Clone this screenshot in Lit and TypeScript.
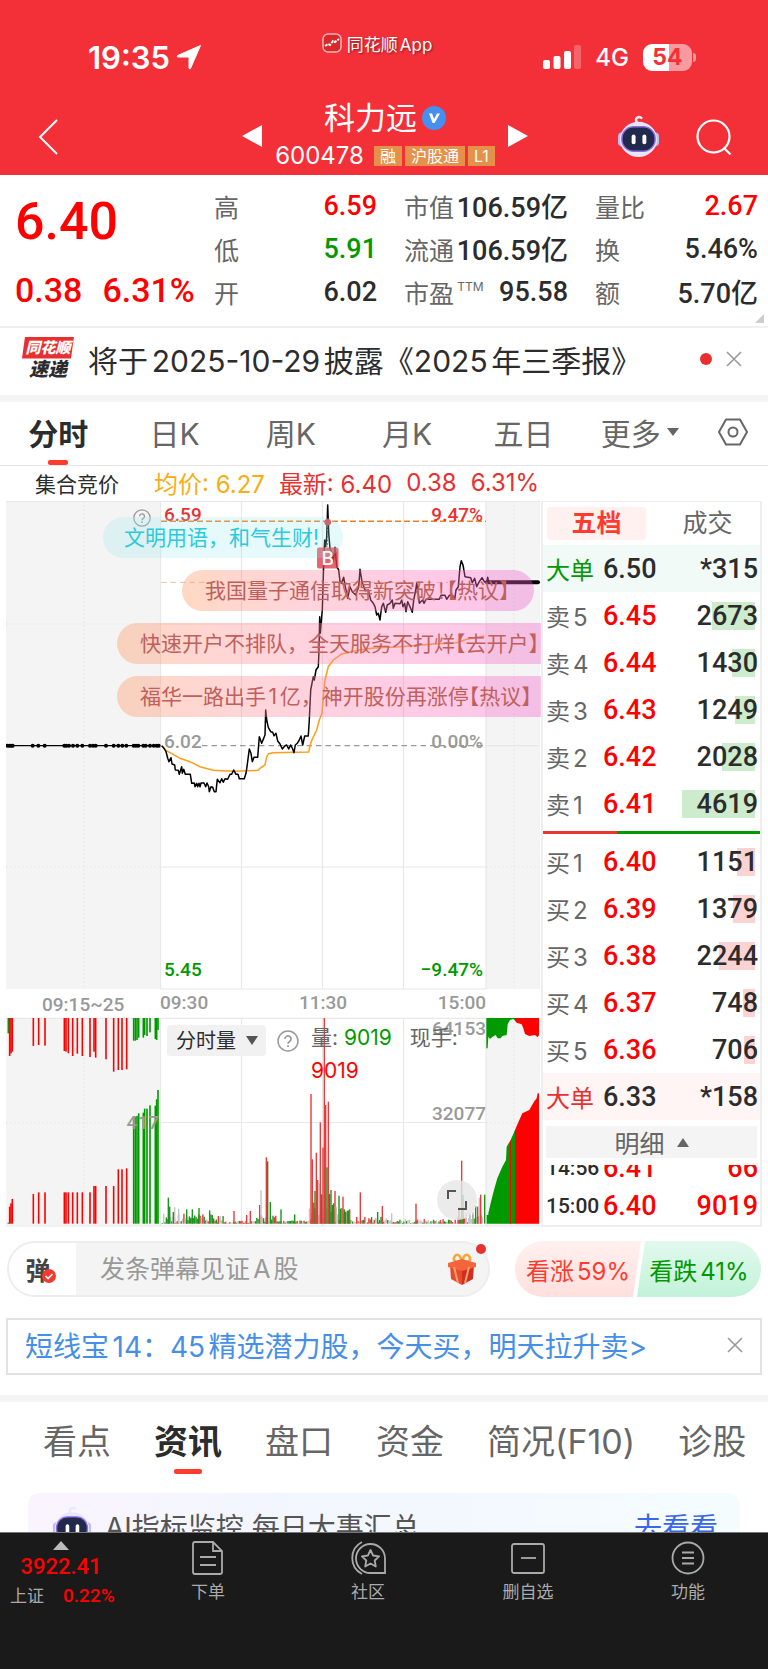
import { LitElement, html, svg, css } from "lit";
import { customElement } from "lit/decorators.js";
import { styleMap } from "lit/directives/style-map.js";

type Row = { label: string; price: string; volume: string; bar: number };

const SELL: Row[] = [
  { label: "卖5", price: "6.45", volume: "2673", bar: 43 },
  { label: "卖4", price: "6.44", volume: "1430", bar: 23 },
  { label: "卖3", price: "6.43", volume: "1249", bar: 20 },
  { label: "卖2", price: "6.42", volume: "2028", bar: 33 },
  { label: "卖1", price: "6.41", volume: "4619", bar: 74 },
];
const BUY: Row[] = [
  { label: "买1", price: "6.40", volume: "1151", bar: 18 },
  { label: "买2", price: "6.39", volume: "1379", bar: 22 },
  { label: "买3", price: "6.38", volume: "2244", bar: 36 },
  { label: "买4", price: "6.37", volume: "748", bar: 12 },
  { label: "买5", price: "6.36", volume: "706", bar: 11 },
];

// Chart series are stored at three units per pixel, relative to the plot's own frame.
const PRICE: number[][] = [
  [485,767],[492,775],[498,785],[500,793],[503,805],[507,815],[513,803],[516,822],[524,825],[526,840],[535,841],[538,853],
  [545,830],[547,850],[551,838],[556,853],[571,853],[573,866],[575,880],[583,879],[585,890],[590,880],[593,890],[597,880],
  [600,890],[603,879],[612,879],[617,890],[621,879],[626,890],[628,905],[633,890],[638,892],[643,905],[648,905],[652,868],
  [660,878],[665,866],[670,877],[675,866],[683,868],[690,853],[695,853],[701,840],[708,853],[714,853],[718,866],[733,866],
  [738,850],[741,830],[748,777],[753,790],[757,815],[762,802],[773,802],[778,740],[785,760],[790,748],[795,735],[797,660],
  [800,690],[805,712],[812,725],[818,727],[822,737],[828,730],[833,753],[840,762],[847,777],[855,767],[860,765],[866,777],
  [872,765],[878,777],[882,788],[886,765],[892,760],[898,750],[903,738],[908,765],[914,738],[925,738],[928,690],[932,600],
  [937,575],[940,560],[943,570],[948,540],[955,530],[957,480],[959,380],[961,430],[965,380],[967,360],[970,260],[972,190],
  [974,150],[977,170],[980,140],[983,45],[986,130],[990,175],[996,190],[1000,215],[1005,172],[1010,230],[1016,240],
  [1020,275],[1024,280],[1031,262],[1036,290],[1043,325],[1050,290],[1057,305],[1067,315],[1076,290],[1080,238],[1086,275],
  [1096,302],[1105,300],[1112,330],[1120,340],[1125,350],[1130,375],[1135,370],[1140,390],[1145,350],[1150,340],[1157,367],
  [1162,345],[1170,340],[1177,330],[1180,355],[1185,340],[1200,341],[1205,330],[1209,350],[1214,340],[1218,365],[1223,335],
  [1230,350],[1237,367],[1241,330],[1247,300],[1250,280],[1255,310],[1258,340],[1268,330],[1272,340],[1278,328],[1318,328],
  [1323,316],[1335,316],[1340,328],[1348,316],[1358,316],[1364,328],[1368,300],[1375,290],[1380,230],[1384,212],[1389,225],
  [1395,260],[1412,263],[1417,278],[1424,265],[1430,290],[1438,275],[1446,263],[1453,275],[1460,278],[1463,262],[1466,277],
];
const AVERAGE: number[][] = [
  [485,767],[500,783],[520,793],[540,805],[570,815],[600,830],[640,841],[700,844],[775,841],[780,835],[795,825],[800,800],
  [806,791],[820,788],[926,786],[932,760],[938,745],[950,720],[958,690],[966,670],[970,620],[975,570],[985,530],[1000,510],
  [1025,492],[1080,480],[1120,474],[1200,470],[1300,462],[1370,458],[1400,448],[1453,438],
];
const AUCTION_DOTS = [
  22,28,33,38,98,115,134,193,199,207,219,232,247,270,279,287,318,341,355,367,379,401,408,415,430,437,450,461,470,476,
];
const path = (pts: number[][]) => pts.map(([x, y]) => `${(x / 3).toFixed(1)},${(490 + y / 3).toFixed(1)}`).join(" ");

// [x, end of the upper bar, start of the lower bar, colour]
const AUCTION: [number, number, number, string][] = [
  [25,310,878,"g"],[29,378,830,"r"],[33,370,820,"r"],[37,365,807,"r"],[100,348,792,"r"],[116,345,787,"r"],[135,347,787,"r"],
  [193,363,787,"r"],[198,365,787,"r"],[205,370,787,"r"],[218,378,787,"r"],[232,371,787,"r"],[247,378,787,"r"],
  [270,381,787,"r"],[282,365,768,"r"],[287,383,768,"r"],[318,388,768,"r"],[341,425,768,"r"],[355,420,718,"r"],
  [366,420,718,"r"],[380,418,715,"r"],[401,332,560,"g"],[406,332,560,"g"],[411,330,558,"g"],[416,323,550,"g"],
  [430,323,548,"g"],[434,315,536,"g"],[441,318,536,"g"],[450,307,526,"g"],[466,327,527,"g"],[470,330,508,"g"],[474,300,480,"g"],
];
const SPIKES: [number, number, string][] = [
  [505,803,"g"],[509,830,"g"],[520,846,"g"],[524,832,"x"],[536,836,"x"],[560,838,"g"],[577,838,"g"],[597,834,"g"],[629,841,"g"],
  [655,858,"r"],[702,843,"r"],[740,855,"r"],[751,843,"r"],[779,825,"r"],[783,781,"x"],[799,682,"r"],[803,694,"g"],[811,816,"g"],
  [843,838,"g"],[884,853,"g"],[933,492,"r"],[937,688,"r"],[941,818,"r"],[945,783,"g"],[949,668,"r"],[953,750,"r"],[957,760,"x"],
  [961,577,"r"],[965,793,"g"],[969,653,"r"],[973,264,"r"],[977,525,"r"],[981,712,"g"],[985,515,"r"],[989,792,"g"],[993,780,"g"],
  [997,825,"g"],[1001,820,"g"],[1005,783,"r"],[1009,830,"x"],[1017,797,"g"],[1021,836,"g"],[1029,800,"r"],[1033,838,"g"],
  [1037,846,"g"],[1045,850,"g"],[1049,838,"r"],[1081,787,"r"],[1133,846,"g"],[1147,828,"r"],[1175,850,"x"],[1248,821,"r"],
  [1377,832,"r"],[1385,692,"r"],[1389,795,"g"],[1399,850,"x"],[1409,850,"x"],[1419,846,"x"],[1427,828,"g"],[1433,830,"r"],
  [1438,803,"x"],[1442,794,"r"],[1454,794,"g"],
];
const envelope = (x: number) =>
  x < 560 ? 30 : x < 670 ? 26 : x < 770 ? 8 : x < 830 ? 24 : x < 925 ? 8 : x < 1050 ? 46 : x < 1160 ? 20 : x < 1370 ? 12 : 30;
const NOISE: [number, number, string][] = Array.from({ length: 238 }, (_, i) => {
  const x = 487 + i * 4.05;
  const n = Math.abs(Math.sin(i * 12.9898) * 43758.5453) % 1;
  const k = Math.abs(Math.sin(i * 78.233) * 9631.17) % 1;
  return [x, 879 - n * envelope(x), k < 0.36 ? "g" : k < 0.68 ? "r" : "x"];
});
const TONE: Record<string, string> = { r: "#f00", g: "#090", x: "#ccc" };
const SOFT: Record<string, string> = { r: "#e63c3c", g: "#1c951c", x: "#c4c4c4" };

@customElement("app-root")
export class AppRoot extends LitElement {
  static styles = css`
    :host {
      display: flex;
      flex-direction: column;
      height: 100vh;
      background: #fff;
      color: #2c2c2c;
      font-family: Inter, "Noto Sans CJK SC", sans-serif;
      text-autospace: normal;
      overflow: hidden;
    }
    * { box-sizing: border-box; }
    button, select, input {
      font: inherit; color: inherit; background: none; border: 0; padding: 0; margin: 0; border-radius: 0;
    }
    a { color: inherit; text-decoration: none; }
    svg { display: block; }
    table { border-collapse: collapse; width: 100%; table-layout: fixed; }
    td, th { padding: 0; font-weight: inherit; text-align: left; white-space: nowrap; }
    .num { font-family: Roboto, "Noto Sans CJK SC", sans-serif; font-weight: 500; text-autospace: no-autospace; }
    .red { color: #f00; }
    .green { color: #090; }

    .head { background: #f33038; color: #fff; flex: none; }
    .status { display: flex; justify-content: space-between; height: 90px; padding: 0 72px 0 88px; }
    .clock { display: flex; align-items: center; gap: 6px; width: 200px; padding-top: 24px; font-size: 31px; font-weight: 600; }
    .brand { display: flex; align-items: center; gap: 5px; padding-bottom: 4px; font-size: 17px; text-shadow: 1px 1px 2px rgba(80,0,0,.6); }
    .signal { display: flex; align-items: center; justify-content: flex-end; gap: 14px; width: 230px; padding-top: 24px; font-size: 24px; font-weight: 500; }
    .battery { display: flex; align-items: center; gap: 1px; }
    .cell { width: 49px; height: 27px; border-radius: 9px; background: linear-gradient(90deg, #fff 54%, #f89ba0 54%); color: #f33038; font-size: 23px; line-height: 27px; font-weight: 700; text-align: center; }
    .nub { width: 3px; height: 9px; border-radius: 0 3px 3px 0; background: #f89ba0; }
    .bar { display: grid; grid-template-columns: 1fr auto 1fr; height: 85px; padding: 6px 36px 0 38px; align-items: center; }
    .stock { display: flex; align-items: center; gap: 13px; }
    .title { display: flex; flex-direction: column; align-items: center; min-width: 218px; }
    .name { display: flex; align-items: center; gap: 5px; height: 40px; margin: 0; font-size: 31px; font-weight: 400; line-height: 40px; }
    .code { display: flex; align-items: center; gap: 3px; height: 36px; font-size: 24px; }
    .code span { margin-right: 7px; }
    .tag { background: #e5914a; font-size: 16px; line-height: 20px; height: 20px; padding: 0 6px; }
    .tools { display: flex; justify-content: flex-end; align-items: center; gap: 36px; padding-top: 2px; }
    .back { justify-self: start; padding-top: 2px; }

    .main { flex: 1; min-height: 0; overflow-y: auto; scrollbar-width: none; }
    .quote { position: relative; display: grid; grid-template-columns: 172px 163px 164px 1fr; align-items: start; column-gap: 27px; padding: 9px 10px 6px 15px; border-bottom: 2px solid #f0f0f0; }
    .last { font-size: 52px; line-height: 76px; }
    .delta { display: flex; gap: 20px; font-size: 34px; line-height: 60px; white-space: nowrap; }
    .stats { margin: 0; display: grid; grid-auto-rows: 43px; }
    .stats div { display: flex; justify-content: space-between; align-items: center; }
    .stats dt { font-size: 25px; color: #666; white-space: nowrap; }
    .stats dt sup { font-size: 12px; vertical-align: 12px; line-height: 0; }
    .stats dd { margin: 0; font-size: 27px; white-space: nowrap; }
    .corner { position: absolute; right: 4px; bottom: 3px; }

    .notice { display: flex; align-items: center; height: 74px; padding: 0 26px 6px 22px; gap: 14px; border-bottom: 7px solid #f4f4f4; }
    .notice a { flex: 1; font-size: 30px; white-space: nowrap; }
    .logo { display: flex; flex-direction: column; align-items: center; width: 52px; font-weight: 900; font-style: italic; }
    .logo b { width: 52px; height: 22px; background: #e93030; color: #fff; font-size: 15px; line-height: 22px; text-align: center; clip-path: polygon(3px 0, 100% 0, 49px 100%, 0 100%); }
    .logo i { font-size: 19px; line-height: 22px; }
    .dot { width: 12px; height: 12px; border-radius: 50%; background: #e93030; }

    .tabs { display: grid; grid-template-columns: repeat(6, 1fr) 70px; height: 64px; border-bottom: 1px solid #e8e8e8; font-size: 30px; color: #666; text-autospace: no-autospace; }
    .tabs button { position: relative; display: flex; align-items: center; justify-content: center; gap: 6px; padding-bottom: 4px; white-space: nowrap; }
    .tabs .on, .news .on { color: #2c2c2c; font-weight: 700; }
    .on::after { content: ""; position: absolute; left: 50%; bottom: 0; width: 20px; height: 5px; margin-left: -10px; border-radius: 2px; background: #ff3b30; }

    .legend { display: flex; align-items: center; height: 35px; padding: 0 0 2px 35px; font-size: 24px; color: #e93030; white-space: nowrap; }
    .legend > :first-child { font-size: 21px; color: #2c2c2c; width: 119px; }
    .legend > :nth-child(2) { color: #f8ad13; margin-right: 14px; }
    .legend > :nth-child(n + 4) { margin-left: 14px; }

    .board { display: grid; grid-template-columns: minmax(0, 1fr) 221px; padding: 0 6px; }
    .chart { position: relative; overflow: hidden; }
    .chart svg.plot { width: 100%; height: auto; }
    .axis { font: 500 19px Roboto, sans-serif; fill: #999; }
    .axis .r { fill: #e93030; }
    .axis .g { fill: #090; }
    .shouts { position: absolute; left: 0; right: 0; top: 16px; display: flex; flex-direction: column; gap: 12px; align-items: flex-start; margin: 0; padding: 0; list-style: none; }
    .shouts li { height: 41px; line-height: 41px; padding: 0 24px 0 23px; border-radius: 21px; font-size: 21px; white-space: nowrap; color: #c0605c; background: linear-gradient(90deg, rgba(255,150,95,.37), rgba(255,140,160,.37) 35%, rgba(255,115,185,.37) 65%, rgba(240,95,205,.37)); margin-left: 111px; }
    .shouts .calm { margin-left: 97px; color: #2bcbdc; background: rgba(150,230,238,.24); padding-left: 21px; }
    .shouts .short { margin-left: 176px; padding-right: 14px; }
    .shouts .open { font-feature-settings: "halt"; }
    .pick { position: absolute; left: 161px; top: 524px; display: flex; align-items: center; width: 99px; height: 31px; border-radius: 4px; background: #f1f1f1; }
    .pick select { appearance: none; width: 99px; height: 31px; padding-left: 9px; font-size: 20px; }
    .pick svg { position: absolute; right: 8px; }
    .help { position: absolute; color: #999; }
    .help.a { left: 127px; top: 8px; }
    .help.b { left: 271px; top: 529px; }
    .amounts { position: absolute; left: 305px; top: 520px; width: 160px; font-size: 21px; line-height: 33px; color: #666; }
    .amounts span { display: inline-block; }
    .amounts .now { margin-left: 12px; }
    .full { position: absolute; left: 431px; top: 679px; width: 40px; height: 40px; border-radius: 50%; background: rgba(230,230,230,.8); display: grid; place-items: center; }

    .depth { border: 2px solid #eee; border-top-width: 1px; }
    .depth header { display: grid; grid-template-columns: 1fr 1fr; gap: 12px; height: 43px; padding: 5px 3px 5px 4px; font-size: 25px; color: #666; }
    .depth header button { border-radius: 3px; line-height: 33px; }
    .depth header .sel { background: #fff1f0; color: #ff3b30; font-weight: 700; }
    .depth tr { height: 47px; }
    .depth th { width: 60px; padding-left: 3px; font-size: 24px; color: #666; font-weight: 400; }
    .depth td { font-size: 27px; }
    .depth td:last-child { text-align: right; padding-right: 2px; background: no-repeat right 5px center / var(--w, 0) 28px; }
    .depth .sell td:last-child { background-image: linear-gradient(#cdeccd, #cdeccd); }
    .depth .buy td:last-child { background-image: linear-gradient(#fcd3d3, #fcd3d3); }
    .depth .bigsell { background: #f1faf6; }
    .depth .bigbuy { background: #fff5f5; }
    .depth .bigsell th { color: #090; }
    .depth .bigbuy th { color: #e93030; }
    .split { height: 3px; margin: 4px 0; background: linear-gradient(90deg, #ee3333 34%, #090 34%); }
    .more { display: flex; align-items: center; justify-content: center; gap: 12px; width: 211px; height: 32px; margin: 6px 3px 7px; background: #f4f4f4; color: #666; font-size: 25px; }
    .ticks { display: flex; flex-direction: column; justify-content: flex-end; height: 60px; overflow: hidden; }
    .ticks table { flex: none; }
    .depth .ticks tr { height: 38px; }
    .depth .ticks th { font: 500 21px Roboto, sans-serif; color: #2c2c2c; }

    .talk { display: flex; align-items: center; gap: 25px; padding: 14px 7px 21px; }
    .say { position: relative; flex: 1; min-width: 0; display: flex; align-items: center; height: 56px; border: 2px solid #ededed; border-radius: 28px; background: linear-gradient(90deg, #fff 67px, #f4f4f4 67px); }
    .say > button { position: relative; flex: none; width: 67px; height: 52px; padding-right: 9px; font-size: 25px; font-weight: 700; color: #444; }
    .say > button svg { position: absolute; left: 33px; top: 26px; }
    .say input { flex: 1; min-width: 0; padding-left: 24px; font-size: 25px; outline: 0; }
    .say input::placeholder { color: #999; opacity: 1; }
    .gift { flex: none; margin-right: 11px; }
    .say .dot { position: absolute; right: 2px; top: 1px; width: 10px; height: 10px; }
    .votes { display: grid; grid-template-columns: 126px 124px; column-gap: 0; flex: none; width: 246px; font-size: 24px; }
    .votes button { height: 56px; white-space: nowrap; }
    .up { color: #ff3b30; background: linear-gradient(#fff0ef, #ffe0de); border-radius: 28px 0 0 28px; clip-path: polygon(0 0, 100% 0, calc(100% - 8px) 100%, 0 100%); }
    .votes .down { margin: 0 4px 0 -4px; width: 124px; color: #090; background: linear-gradient(#e2f9ee, #c2f2d8); border-radius: 0 28px 28px 0; clip-path: polygon(8px 0, 100% 0, 100% 100%, 0 100%); }

    .promo { display: flex; justify-content: space-between; align-items: center; height: 57px; margin: 0 6px 20px; padding: 0 17px 3px; border: 2px solid #e2e2e2; font-size: 28px; color: #468fe8; white-space: nowrap; }
    .news { display: flex; gap: 43px; height: 79px; padding: 0 20px 0 43px; border-top: 7px solid #f4f4f4; box-sizing: content-box; font-size: 34px; color: #666; }
    .news button { position: relative; height: 75px; white-space: nowrap; flex: none; }
    .news .on::after { width: 28px; margin-left: -14px; bottom: 3px; }
    .card { display: flex; align-items: center; gap: 13px; height: 66px; margin: 12px 28px 0; padding: 0 22px 0 24px; border-radius: 12px; background: linear-gradient(90deg, #faf4fe, #f2f6fe 35%, #f5fcfe); font-size: 28px; color: #555; text-autospace: no-autospace; }
    .card span { flex: 1; }
    .card a { color: #3b66e8; }

    .nav { display: grid; grid-template-columns: 128px repeat(4, 1fr); flex: none; height: 137px; border-top: 1px solid #777; background: #1a1a1a; color: #aaa; font-size: 17px; }
    .nav button { display: flex; flex-direction: column; align-items: center; gap: 5px; padding-top: 8px; line-height: 24px; }
    .nav .index { gap: 4px; align-items: flex-start; padding-left: 10px; }
    .index svg { margin-left: 43px; }
    .index b { width: 102px; text-align: center; font-size: 22px; line-height: 26px; }
    .index p { display: flex; gap: 19px; margin: 0; line-height: 24px; }
    .index p b { width: auto; font-size: 19px; line-height: 24px; }
  `;

  private robot(size: number) {
    return html`<svg width=${size} height=${size} viewBox="0 0 44 44" aria-hidden="true">
      <path d="M20 7c-2-4 2-6 5-4" fill="none" stroke="#e8e8ff" stroke-width="2.5" stroke-linecap="round"/>
      <rect x="1" y="18" width="8" height="14" rx="4" fill="#b9bdf0"/><rect x="35" y="18" width="8" height="14" rx="4" fill="#b9bdf0"/>
      <ellipse cx="22" cy="25" rx="19" ry="18" fill="#e6e6fb"/>
      <rect x="5" y="12" width="34" height="25" rx="12" fill="#1f2a4d" stroke="#8f6be0" stroke-width="1.5"/>
      <rect x="15" y="20" width="4" height="10" rx="2" fill="#fff"/><rect x="26" y="20" width="4" height="10" rx="2" fill="#fff"/>
    </svg>`;
  }

  private cross() {
    return html`<svg width="16" height="16" viewBox="0 0 16 16"><path d="M1 1l14 14M15 1L1 15" stroke="#999" stroke-width="1.6"/></svg>`;
  }

  private question(size: number) {
    return html`<svg width=${size} height=${size} viewBox="0 0 22 22" fill="none" stroke="currentColor" stroke-width="1.5">
      <circle cx="11" cy="11" r="10"/><path d="M8 9a3 3 0 1 1 4.6 2.500c-1.200.8-1.600 1.200-1.600 2.300" stroke-width="1.7"/><path d="M11 15.300v1.700" stroke-width="1.8"/>
    </svg>`;
  }

  private stat(label: unknown, value: string, tone = "") {
    return html`<div><dt>${label}</dt><dd class="num ${tone}">${value}</dd></div>`;
  }

  private levels(rows: Row[], kind: string) {
    return rows.map(
      (r) => html`<tr class=${kind}><th scope="row">${r.label}</th><td class="num red">${r.price}</td>
        <td class="num" style=${styleMap({ "--w": `${r.bar}px` })}>${r.volume}</td></tr>`
    );
  }

  private plot() {
    const bar = (x: number, y1: number, y2: number, fill: string, w = 1.4) =>
      svg`<rect x=${x / 3 - w / 2} y=${930 + y1 / 3} width=${w} height=${Math.max(0.3, (y2 - y1) / 3)} fill=${fill}></rect>`;
    return html`<svg class="plot" viewBox="6 501 535 726" role="img" aria-label="分时走势">
      <g fill="#f4f4f4">
        <rect x="6" y="501" width="154.5" height="488"/><rect x="486" y="501" width="54" height="488"/>
        <rect x="6" y="1018" width="154.5" height="208"/><rect x="486" y="1018" width="54" height="208"/>
      </g>
      <g stroke="#e8e8e8" stroke-width="1.2" fill="none">
        <path d="M6 501.500H540M160 989H486M6 1018.300H540M6 1226H540M160.500 501V989M241.500 501V989M322.500 501V989M403.500 501V989M486 501V989"/>
        <path d="M160.500 1018V1226M241.500 1018V1226M322.500 1018V1226M403.500 1018V1226M486 1018V1226M160 624H486M160 867H486M160 1122.500H486M486 745.700H540"/>
        <path stroke-dasharray="2 2" d="M84 501V989M84 1018V1226M514 501V989M514 1018V1226M6 624H160M486 624H540M6 867H160M486 867H540M6 1123H160M486 1123H540"/>
      </g>
      <path d="M202 745.700H486" stroke="#999" stroke-dasharray="5.5 4" stroke-width="1.2"/>
      <path d="M161 582.400H448" stroke="#e8c49a" stroke-dasharray="5.5 4"/>
      <path d="M161 521.300H486" stroke="#f08020" stroke-dasharray="6 3" stroke-width="1.5"/>
      <g class="axis">
        <text class="r" x="164" y="521">6.59</text><text class="r" x="483" y="521" text-anchor="end">9.47%</text>
        <text x="164" y="748">6.02</text><text x="483" y="748" text-anchor="end">0.00%</text>
        <text class="g" x="164" y="976">5.45</text><text class="g" x="483" y="976" text-anchor="end">−9.47%</text>
        <text x="42" y="1011">09:15~25</text><text x="160" y="1009">09:30</text>
        <text x="323" y="1009" text-anchor="middle">11:30</text><text x="486" y="1009" text-anchor="end">15:00</text>
      </g>
      <polyline points=${path(AVERAGE)} fill="none" stroke="#fb9f1a" stroke-width="1.5"/>
      <polyline points=${path(PRICE)} fill="none" stroke="#000" stroke-width="1.5" stroke-linejoin="round"/>
      <path d="M487 582.300H538" stroke="#000" stroke-width="4" stroke-linecap="round"/>
      <path d="M6 745.700H160" stroke="#000" stroke-width="1.3"/>
      ${AUCTION_DOTS.map((x) => svg`<circle cx=${x / 3} cy="745.7" r="2"></circle>`)}
      <g fill="#e03a42">
        <path d="M327.500 522V547" stroke="#e03a42" stroke-dasharray="2 1.5"/>
        <circle cx="327.7" cy="522.3" r="3.3"/>
        <rect x="317" y="547.5" width="21.5" height="21" rx="2" fill-opacity=".78"/>
      </g>
      <text x="327.7" y="565" text-anchor="middle" font-family="Inter" font-size="19" font-weight="500" fill="#fff">B</text>
      <g>${AUCTION.map(([x, t, b, c]) => [bar(x, 264, t, TONE[c], 1.6), bar(x, b, 881, TONE[c], 1.6)])}</g>
      <g>${NOISE.map(([x, y, c]) => bar(x, y, 881, SOFT[c]))}${SPIKES.map(([x, y, c]) => bar(x, y, 881, SOFT[c]))}</g>
      <g transform="translate(270 930) scale(.33333)">
        <path fill="#090" d="M650 881V855H655V850L663 815L672 780L682 745L697 710L708 690L710 650L722 630L735 600V881Z"/>
        <path fill="#f00" d="M735 881V600L745 577L757 550L778 540L792 515L800 505L803 490H807V881ZM720 881V632H723V881Z"/>
        <path fill="#090" d="M649 264V355H653L655 320L660 327L668 320L677 315L683 325L692 325L697 318L710 315L713 283L720 270L730 267L735 272V264Z"/>
        <path fill="#f00" d="M735 264V272L740 278L755 283L760 295L765 312L778 318L795 315L803 322L807 315V264Z"/>
      </g>
      <g class="axis">
        <text x="159" y="1129" text-anchor="end">417</text><text x="486" y="1035" text-anchor="end">64153</text>
        <text x="486" y="1120" text-anchor="end">32077</text>
      </g>
    </svg>`;
  }

  render() {
    return html`
      <header class="head">
        <div class="status">
          <div class="clock">19:35
            <svg width="26" height="26" viewBox="0 0 26 26"><path d="M24.500 1.500L14.500 24.500Q13.600 25.500 13 24V13H2Q.5 12.500 1.500 11.600Z" fill="#fff" stroke="#fff" stroke-linejoin="round"/></svg>
          </div>
          <div class="brand">
            <svg width="20" height="20" viewBox="0 0 20 20"><rect x="1" y="1" width="18" height="18" rx="5" fill="#d8282c" stroke="#f4b5b5" stroke-width="1.5"/><path d="M3 13l3-2 2 1 3-4 2 1 4-3" fill="none" stroke="#fff" stroke-width="2" stroke-dasharray="3 1"/></svg>
            同花顺App
          </div>
          <div class="signal">
            <svg width="38" height="24" viewBox="0 0 38 24" fill="#fff"><rect y="15" width="7" height="9" rx="2"/><rect x="10.5" y="11" width="7" height="13" rx="2"/><rect x="21" y="6" width="7" height="18" rx="2"/><rect x="31" width="7" height="24" rx="2" opacity=".25"/></svg>
            4G
            <div class="battery"><div class="cell">54</div><div class="nub"></div></div>
          </div>
        </div>
        <div class="bar">
          <button class="back" aria-label="返回"><svg width="20" height="36" viewBox="0 0 20 36"><path d="M19 1L2 18L19 35" fill="none" stroke="#fff" stroke-width="2"/></svg></button>
          <div class="stock">
            <button aria-label="上一只"><svg width="20" height="22" viewBox="0 0 20 22"><path d="M20 0V22L0 11Z" fill="#fff"/></svg></button>
            <div class="title">
              <h1 class="name">科力远
                <svg width="24" height="24" viewBox="0 0 24 24"><circle cx="12" cy="12" r="12" fill="#468fef"/><path d="M7 7.500h3l2.200 5.500L15 7.500h3L12.600 17h-2Z" fill="#fff"/></svg>
              </h1>
              <div class="code"><span>600478</span><div class="tag">融</div><div class="tag">沪股通</div><div class="tag">L1</div></div>
            </div>
            <button aria-label="下一只"><svg width="20" height="22" viewBox="0 0 20 22"><path d="M0 0V22L20 11Z" fill="#fff"/></svg></button>
          </div>
          <div class="tools">
            <button aria-label="AI助手">${this.robot(43)}</button>
            <button aria-label="搜索"><svg width="36" height="36" viewBox="0 0 36 36" fill="none" stroke="#fff" stroke-width="2.2"><circle cx="17.5" cy="17.5" r="16"/><path d="M28 29l6.500 6.500"/></svg></button>
          </div>
        </div>
      </header>

      <main class="main">
        <section class="quote">
          <div class="num red"><div class="last">6.40</div><div class="delta"><span>0.38</span><span>6.31%</span></div></div>
          <dl class="stats">${this.stat("高", "6.59", "red")}${this.stat("低", "5.91", "green")}${this.stat("开", "6.02")}</dl>
          <dl class="stats">${this.stat("市值", "106.59亿")}${this.stat("流通", "106.59亿")}${this.stat(html`市盈<sup>TTM</sup>`, "95.58")}</dl>
          <dl class="stats">${this.stat("量比", "2.67", "red")}${this.stat("换", "5.46%")}${this.stat("额", "5.70亿")}</dl>
          <svg class="corner" width="9" height="9" viewBox="0 0 9 9"><path d="M9 0V9H0Z" fill="#ccc"/></svg>
        </section>

        <section class="notice">
          <div class="logo"><b>同花顺</b><i>速递</i></div>
          <a href="#notice">将于2025-10-29披露《2025年三季报》</a>
          <span class="dot"></span>
          <button aria-label="关闭公告">${this.cross()}</button>
        </section>

        <nav class="tabs">
          <button class="on">分时</button><button>日K</button><button>周K</button><button>月K</button><button>五日</button>
          <button>更多<svg width="12" height="8" viewBox="0 0 12 8"><path d="M0 0H12L6 8Z" fill="#666"/></svg></button>
          <button aria-label="设置"><svg width="30" height="28" viewBox="0 0 30 28" fill="none" stroke="#666" stroke-width="2"><path d="M8 1.500H22L29 14L22 26.500H8L1 14Z" stroke-linejoin="round"/><circle cx="15" cy="14" r="4.5"/></svg></button>
        </nav>

        <div class="legend"><span>集合竞价</span><span>均价: 6.27</span><span>最新: 6.40</span><span>0.38</span><span>6.31%</span></div>

        <section class="board">
          <div class="chart">
            ${this.plot()}
            <button class="help a" aria-label="集合竞价说明">${this.question(18)}</button>
            <div class="pick"><select aria-label="副图指标"><option>分时量</option></select><svg width="12" height="9" viewBox="0 0 12 9"><path d="M0 0H12L6 9Z" fill="#555"/></svg></div>
            <button class="help b" aria-label="分时量说明">${this.question(22)}</button>
            <div class="amounts">量: <span class="green">9019</span> <span class="now">现手:</span> <span class="red">9019</span></div>
            <button class="full" aria-label="全屏"><svg width="22" height="22" viewBox="0 0 22 22" fill="none" stroke="#555" stroke-width="2"><path d="M2 10V2H10M20 12V20H12"/></svg></button>
            <ul class="shouts">
              <li class="calm">文明用语，和气生财!</li>
              <li class="short">我国量子通信取得新突破<span class="open">！【</span>热议】</li>
              <li>快速开户不排队，全天服务不打烊<span class="open">【</span>去开户】</li>
              <li>福华一路出手1亿，神开股份再涨停<span class="open">【</span>热议】</li>
            </ul>
          </div>
          <aside class="depth">
            <header><button class="sel">五档</button><button>成交</button></header>
            <table>
              <tr class="bigsell"><th scope="row">大单</th><td class="num">6.50</td><td class="num">*315</td></tr>
              ${this.levels(SELL, "sell")}
            </table>
            <div class="split"></div>
            <table>
              ${this.levels(BUY, "buy")}
              <tr class="bigbuy"><th scope="row">大单</th><td class="num">6.33</td><td class="num">*158</td></tr>
            </table>
            <button class="more">明细<svg width="12" height="9" viewBox="0 0 12 9"><path d="M0 9H12L6 0Z" fill="#666"/></svg></button>
            <div class="ticks"><table>
              <tr><th scope="row">14:56</th><td class="num red">6.41</td><td class="num red">66</td></tr>
              <tr><th scope="row">15:00</th><td class="num red">6.40</td><td class="num red">9019</td></tr>
            </table></div>
          </aside>
        </section>

        <section class="talk">
          <div class="say">
            <button aria-label="弹幕开关">弹<svg width="14" height="14" viewBox="0 0 14 14"><circle cx="7" cy="7" r="7" fill="#f33a30"/><path d="M3.500 7l2.600 2.600L10.500 5" fill="none" stroke="#fff" stroke-width="1.6"/></svg></button>
            <input type="text" aria-label="弹幕" placeholder="发条弹幕见证A股" />
            <svg class="gift" width="30" height="32" viewBox="0 0 30 32"><path d="M15 10C8 10 5 7 8 3s7 2 7 7c0-5 4-11 7-7s0 7-7 7Z" fill="none" stroke="#f2a93c" stroke-width="2.6"/><path d="M3 12L15 16V32L4 26Z" fill="#e84a2c"/><path d="M27 12L15 16V32L26 26Z" fill="#cf2f22"/><path d="M1 10L15 6L29 10V14L15 18L1 14Z" fill="#f4653c"/><path d="M7 14L11 30M22 14L18 30" stroke="#f9a06a" stroke-width="2"/></svg>
            <span class="dot"></span>
          </div>
          <div class="votes"><button class="up">看涨59%</button><button class="down">看跌41%</button></div>
        </section>

        <section class="promo"><a href="#promo">短线宝14：45精选潜力股，今天买，明天拉升卖&gt;</a><button aria-label="关闭推广">${this.cross()}</button></section>

        <nav class="news"><button>看点</button><button class="on">资讯</button><button>盘口</button><button>资金</button><button>简况(F10)</button><button>诊股</button></nav>
        <section class="card">${this.robot(40)}<span>AI指标监控 每日大事汇总</span><a href="#ai">去看看</a></section>
      </main>

      <nav class="nav">
        <button class="index">
          <svg width="16" height="9" viewBox="0 0 16 9"><path d="M0 9H16L8 0Z" fill="#bbb"/></svg>
          <b class="num red">3922.41</b>
          <p>上证<b class="num red">0.22%</b></p>
        </button>
        <button><svg width="34" height="34" viewBox="0 0 34 34" fill="none" stroke="#aaa" stroke-width="1.8"><path d="M4 1H22L31 10V31Q31 33 29 33H4Q2 33 2 31V3Q2 1 4 1ZM22 1V10H31M9 16H25M9 24H25"/></svg>下单</button>
        <button><svg width="36" height="34" viewBox="0 0 36 34" fill="none" stroke="#aaa" stroke-width="1.8"><path d="M35 32H21A14.500 14.500 0 1 1 35 17.500ZM12 1A18 18 0 0 0 12 33"/><path d="M20.500 9l2.600 5.500 6 .8-4.400 4.200 1.100 6-5.300-3-5.300 3 1.100-6-4.400-4.200 6-.8Z" stroke-linejoin="round"/></svg>社区</button>
        <button><svg width="34" height="34" viewBox="0 0 34 34" fill="none" stroke="#aaa" stroke-width="1.8"><rect x="1" y="3" width="32" height="29" rx="2"/><path d="M10 17H25"/></svg>删自选</button>
        <button><svg width="34" height="34" viewBox="0 0 34 34" fill="none" stroke="#aaa" stroke-width="1.8"><circle cx="17" cy="17" r="15.5"/><path d="M11 11.500H23M11 17H23M11 22.500H23"/></svg>功能</button>
      </nav>
    `;
  }
}
